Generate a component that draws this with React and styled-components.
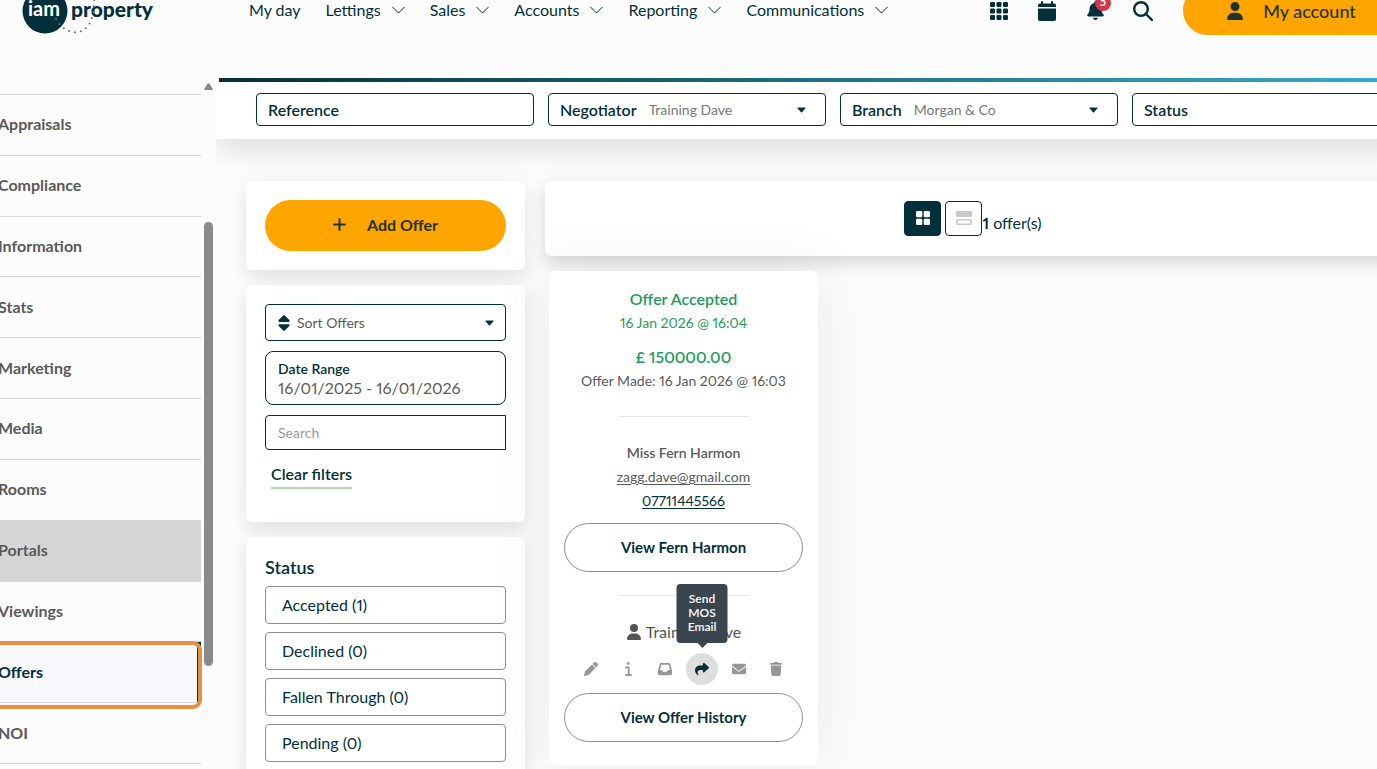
import React, { useState } from "react";
import styled, { createGlobalStyle } from "styled-components";
import {
  FaBell,
  FaEnvelope,
  FaInbox,
  FaPen,
  FaShare,
  FaSort,
  FaTrash,
  FaUser,
} from "react-icons/fa6";

const GlobalStyle = createGlobalStyle`
  * {
    box-sizing: border-box;
  }

  body {
    margin: 0;
    background: #fcfcfc;
    color: #545454;
    font-family: Lato, "Open Sans", sans-serif;
    font-size: 16px;
    font-variant-numeric: proportional-nums;
  }

  button,
  input,
  select {
    font: inherit;
    color: inherit;
    margin: 0;
  }

  button {
    cursor: pointer;
  }
`;

const Shell = styled.div`
  height: 100vh;
  overflow: hidden;
`;

const Page = styled.div`
  display: flex;
  flex-direction: column;
  height: calc(100vh + 14px);
  margin: -14px -24px 0 -2px;
`;

const Header = styled.header`
  display: flex;
  align-items: flex-start;
  flex: none;
  height: 92px;
  padding-left: 24px;
  color: #02303a;
`;

const LogoLink = styled.a`
  display: flex;
  width: 136px;
  margin-right: 91px;
  color: #02303a;
`;

const Nav = styled.nav`
  display: flex;
  align-items: center;
  gap: 25px;
  height: 48px;
`;

const NavLink = styled.a`
  display: flex;
  align-items: center;
  gap: 11px;
  font-size: 16px;
  line-height: 24px;
  white-space: nowrap;
  color: #02303a;
  text-decoration: none;
`;

const Tools = styled.div`
  display: flex;
  align-items: center;
  gap: 24px;
  height: 49px;
  margin-left: auto;
`;

const ToolButton = styled.button`
  position: relative;
  display: flex;
  align-items: center;
  justify-content: center;
  width: 24px;
  height: 24px;
  padding: 0;
  border: 0;
  background: none;
  color: #02303a;
`;

const Badge = styled.span`
  position: absolute;
  top: -4px;
  right: -4px;
  width: 16px;
  height: 16px;
  border-radius: 50%;
  background: #d63649;
  color: #fff;
  font-size: 11px;
  font-weight: 700;
  line-height: 14px;
  text-align: center;
`;

const AccountButton = styled.button`
  display: flex;
  align-items: center;
  justify-content: center;
  gap: 19px;
  width: 218px;
  height: 49px;
  margin-left: 4px;
  padding: 0 8px 0 6px;
  border: 0;
  border-radius: 25px;
  background: #ffa500;
  color: #1f3428;
  font-size: 18px;
  font-weight: 500;
`;

const Body = styled.div`
  display: flex;
  flex: 1;
  min-height: 0;
`;

const Sidebar = styled.nav`
  display: flex;
  flex: none;
  width: 218px;
`;

const SideList = styled.ul`
  display: flex;
  flex-direction: column;
  width: 203px;
  margin: 16px 0 5px;
  padding: 0;
  border-top: 1px solid #d9d9d9;
  list-style: none;
`;

const SideItem = styled.li`
  position: relative;
  flex: 1;
  min-height: 48px;
  border-bottom: 1px solid #d9d9d9;
`;

const SideLink = styled.a`
  display: flex;
  align-items: center;
  height: 100%;
  padding-bottom: 2px;
  border-right: 4px solid ${(p) => (p.$active ? "#02303a" : "transparent")};
  background: ${(p) => (p.$active ? "#f8f8fd" : p.$hovered ? "#d5d5d5" : "none")};
  color: ${(p) => (p.$active ? "#02303a" : "#5a5a5a")};
  font-size: 16px;
  font-weight: 700;
  text-decoration: none;
`;

const Highlight = styled.span`
  position: absolute;
  inset: -1px -1px -7px -12px;
  border: 4px solid #e8903f;
  border-radius: 9px;
  pointer-events: none;
`;

const ScrollTrack = styled.div`
  display: flex;
  flex-direction: column;
  width: 9px;
  margin-left: 3px;
  padding-top: 5px;
`;

const ScrollArrow = styled.svg`
  width: 9px;
  height: 7px;
  margin-bottom: 132px;
  fill: #8a8a8a;
`;

const ScrollThumb = styled.div`
  height: 444px;
  border-radius: 5px;
  background: #8a8a8a;
`;

const Main = styled.main`
  flex: 1;
  min-width: 0;
  overflow: hidden;
`;

const FilterBar = styled.form`
  position: relative;
  background: #fff;
  box-shadow: 0 14px 24px rgba(0, 0, 0, 0.1);
`;

const Rule = styled.div`
  height: 4px;
  margin-left: 3px;
  background: linear-gradient(90deg, #042f3a, #1f6f80 50%, #37adcc);
`;

const Filters = styled.div`
  display: grid;
  grid-auto-flow: column;
  grid-auto-columns: 278px;
  gap: 14px;
  padding: 11px 0 13px 40px;
`;

const Field = styled.div`
  display: flex;
  align-items: center;
  gap: 12px;
  height: 33px;
  padding: 0 19px 0 11px;
  border: 1px solid #02303a;
  border-radius: 4px;
  background: #fff;
`;

const FieldLabel = styled.label`
  color: #02303a;
  font-size: 16px;
  font-weight: 600;
`;

const FieldInput = styled.input`
  flex: 1;
  min-width: 0;
  padding: 0;
  border: 0;
  outline: 0;
  background: none;
`;

const PlainSelect = styled.select`
  flex: 1;
  min-width: 0;
  padding: 0;
  border: 0;
  outline: 0;
  appearance: none;
  background: none;
  color: ${(p) => p.$color || "#777"};
  font-size: 14px;
`;

const Content = styled.div`
  display: flex;
  align-items: flex-start;
  gap: 20px;
  padding: 42px 0 0 30px;
`;

const FilterColumn = styled.aside`
  display: flex;
  flex-direction: column;
  flex: none;
  gap: 15px;
  width: 279px;
`;

const Card = styled.section`
  padding: 19px;
  border-radius: 6px;
  background: #fff;
  box-shadow: 0 8px 16px rgba(0, 0, 0, 0.08), 0 0 30px rgba(0, 0, 0, 0.04);
`;

const AddButton = styled.button`
  display: flex;
  align-items: center;
  justify-content: center;
  gap: 21px;
  width: 100%;
  height: 51px;
  padding: 0 6px 2px;
  border: 0;
  border-radius: 26px;
  background: #ffa500;
  color: #1f3428;
  font-weight: 700;
`;

const FilterCard = styled(Card)`
  display: flex;
  flex-direction: column;
  align-items: stretch;
  gap: 10px;
  padding-bottom: 33px;
`;

const SortField = styled.div`
  display: flex;
  align-items: center;
  gap: 4px;
  height: 37px;
  padding: 0 11px 0 9px;
  border: 1px solid #02303a;
  border-radius: 4px;
  color: #02303a;
`;

const DateField = styled.div`
  display: flex;
  flex-direction: column;
  justify-content: center;
  height: 54px;
  padding: 0 12px;
  border: 1px solid #02303a;
  border-radius: 8px;

  label {
    color: #02303a;
    font-size: 14px;
    font-weight: 600;
    line-height: 18px;
  }

  input {
    width: 100%;
    height: 18px;
    padding: 0;
    border: 0;
    outline: 0;
    background: none;
    color: #5c5c5c;
    font-size: 16px;
  }
`;

const SearchInput = styled.input`
  width: 100%;
  height: 35px;
  padding: 0 12px;
  border: 1px solid #02303a;
  border-radius: 4px 0 0 4px;
  outline: 0;
  background: #fff;
  font-size: 14px;

  &::placeholder {
    color: #999;
    opacity: 1;
  }
`;

const ClearButton = styled.button`
  align-self: flex-start;
  height: 29px;
  margin-left: 6px;
  padding: 0;
  border: 0;
  border-bottom: 2px solid #b7dca6;
  background: none;
  color: #02303a;
  font-weight: 600;
`;

const StatusTitle = styled.h2`
  margin: 0 0 8px;
  color: #02303a;
  font-size: 18px;
  font-weight: 600;
  line-height: 22px;
`;

const StatusList = styled.div`
  display: flex;
  flex-direction: column;
  gap: 8px;
`;

const StatusButton = styled.button`
  height: 38px;
  padding: 0 16px 2px;
  border: 1px solid #8c8f91;
  border-radius: 4px;
  background: #fff;
  color: #02303a;
  text-align: left;
`;

const Results = styled.div`
  display: flex;
  flex-direction: column;
  flex: 1;
  gap: 15px;
  min-width: 0;
`;

const ResultsBar = styled.div`
  display: flex;
  align-items: center;
  justify-content: center;
  height: 75px;
  border-radius: 6px;
  background: #fff;
  box-shadow: 0 8px 16px rgba(0, 0, 0, 0.12), 0 0 30px rgba(0, 0, 0, 0.04);
`;

const ViewButton = styled.button`
  display: flex;
  align-items: center;
  justify-content: center;
  width: 37px;
  height: 35px;
  padding: 0 0 2px;
  border: 1px solid #02303a;
  border-radius: 4px;
  background: ${(p) => (p.$active ? "#02303a" : "#fff")};
  color: ${(p) => (p.$active ? "#fff" : "#c9c9c9")};

  & + & {
    margin-left: 4px;
  }
`;

const Count = styled.p`
  margin: 0;
  padding-top: 9px;
  color: #02303a;
  line-height: 24px;
`;

const OfferCard = styled.article`
  display: flex;
  flex-direction: column;
  align-items: center;
  width: 269px;
  margin-left: 4px;
  padding: 16px 15px 23px;
  border-radius: 6px;
  background: #fff;
  box-shadow: 0 0 60px rgba(0, 0, 0, 0.08);
`;

const OfferLine = styled.p`
  margin: ${(p) => (p.$spaced ? "10px" : 0)} 0 0;
  color: ${(p) => (p.$green ? "#1c9c5b" : "#5a5a5a")};
  font-size: ${(p) => (p.$large ? "16px" : "14px")};
  font-weight: ${(p) => (p.$strong ? 600 : 400)};
  line-height: 24px;
`;

const ContactLink = styled.a`
  color: ${(p) => (p.$dark ? "#02303a" : "#5a5a5a")};
  font-size: 14px;
  line-height: 24px;
  text-underline-offset: 2px;
`;

const Divider = styled.hr`
  width: 132px;
  margin: 23px 0 24px;
  border: 0;
  border-top: 1px solid #e6e6e6;
`;

const PillButton = styled.button`
  width: 100%;
  height: 49px;
  margin-top: ${(p) => (p.$spaced ? "10px" : 0)};
  padding: 0 0 2px;
  border: 1px solid #8c8f91;
  border-radius: 25px;
  background: #fff;
  color: #02303a;
  font-size: 15px;
  font-weight: 700;
`;

const Owner = styled.p`
  display: flex;
  align-items: center;
  gap: 4px;
  margin: 0 0 9px;
  line-height: 24px;
`;

const Actions = styled.div`
  display: flex;
  gap: 5px;
  margin-bottom: 8px;
`;

const ActionButton = styled.button`
  position: relative;
  display: flex;
  align-items: center;
  justify-content: center;
  width: 32px;
  height: 32px;
  padding: 0;
  border: 0;
  border-radius: 50%;
  background: ${(p) => (p.$active ? "#dedede" : "none")};
  color: ${(p) => (p.$active ? "#02303a" : "#969696")};
`;

const Tooltip = styled.span`
  position: absolute;
  bottom: 42px;
  left: 50%;
  width: 51px;
  padding: 8px 10px 9px;
  transform: translateX(-50%);
  border-radius: 4px;
  background: #39464f;
  color: #fff;
  font-size: 12px;
  font-weight: 600;
  line-height: 14px;
  text-align: center;

  &::after {
    content: "";
    position: absolute;
    top: 100%;
    left: 50%;
    margin-left: -5px;
    border: 5px solid transparent;
    border-top-color: #39464f;
    border-bottom: 0;
  }
`;

const Logo = () => (
  <svg width="136" height="50" viewBox="0 0 136 50" role="img" aria-label="iam property">
    <circle cx="23" cy="25" r="22.5" fill="#02303a" />
    <text x="6" y="30" fill="#fff" fontSize="20" fontWeight="700">iam</text>
    <text x="49" y="31" fill="#02303a" fontSize="21" fontWeight="900">property</text>
    <path
      d="M34 33 Q39 42 47 45 Q58 49 66 40 Q72 32 72 14"
      fill="none"
      stroke="#56747b"
      strokeWidth="2"
      strokeLinecap="round"
      strokeDasharray="0 6"
    />
  </svg>
);

const Chevron = () => (
  <svg width="13" height="8" viewBox="0 0 13 8" fill="none" stroke="currentColor" strokeLinecap="round" strokeLinejoin="round" aria-hidden="true">
    <path d="M.7 1.2 6.5 7 12.3 1.2" />
  </svg>
);

const Caret = () => (
  <svg width="9" height="6" viewBox="0 0 9 6" fill="#02303a" aria-hidden="true">
    <path d="M1 .5h7q.8 0 .4.8L5 5.2q-.5.5-1 0L.6 1.3Q.2.5 1 .5Z" />
  </svg>
);

const AppsIcon = () => (
  <svg width="18" height="18" viewBox="0 0 18 18" fill="currentColor" aria-hidden="true">
    {[0, 6.5, 13].map((y) =>
      [0, 6.5, 13].map((x) => <rect key={`${x}-${y}`} x={x} y={y} width="5" height="5" rx="1.2" />)
    )}
  </svg>
);

const CalendarIcon = () => (
  <svg width="18" height="20" viewBox="0 0 18 20" fill="currentColor" aria-hidden="true">
    <path d="M4 0q1 0 1 1v1.5h8V1q0-1 1-1t1 1v1.5h1.300q1.700 0 1.700 1.700V6H0V4.200q0-1.700 1.700-1.700H3V1q0-1 1-1ZM0 7.500h18v10.700q0 1.800-1.800 1.800H1.800Q0 20 0 18.200Z" />
  </svg>
);

const SearchIcon = () => (
  <svg width="20" height="20" viewBox="0 0 20 20" fill="none" stroke="currentColor" strokeWidth="2.4" strokeLinecap="round" aria-hidden="true">
    <circle cx="8" cy="8" r="6.8" />
    <path d="m13 13 5.800 5.800" />
  </svg>
);

const PlusIcon = () => (
  <svg width="13" height="13" viewBox="0 0 13 13" stroke="currentColor" strokeWidth="2" strokeLinecap="round" aria-hidden="true">
    <path d="M6.500 1v11M1 6.500h11" />
  </svg>
);

const InfoIcon = () => (
  <svg width="7" height="14" viewBox="0 0 7 14" fill="none" stroke="currentColor" strokeWidth="1.800" aria-hidden="true">
    <circle cx="3.200" cy="1.500" r="1.400" fill="currentColor" stroke="none" />
    <path d="M1 5.500h2.700V13M1 13h5" strokeLinecap="round" />
  </svg>
);

const GridIcon = () => (
  <svg width="14" height="14" viewBox="0 0 14 14" fill="currentColor" aria-hidden="true">
    <rect width="6.300" height="6.300" rx="1.200" />
    <rect x="7.700" width="6.300" height="6.300" rx="1.200" />
    <rect y="7.700" width="6.300" height="6.300" rx="1.200" />
    <rect x="7.700" y="7.700" width="6.300" height="6.300" rx="1.200" />
  </svg>
);

const RowsIcon = () => (
  <svg width="16" height="14" viewBox="0 0 16 14" fill="currentColor" aria-hidden="true">
    <rect width="16" height="6" rx="1.500" />
    <rect x=".8" y="8.800" width="14.400" height="4.400" rx="1.200" fill="none" stroke="currentColor" strokeWidth="1.600" />
  </svg>
);

const navItems = [
  { label: "My day" },
  { label: "Lettings", menu: true },
  { label: "Sales", menu: true },
  { label: "Accounts", menu: true },
  { label: "Reporting", menu: true },
  { label: "Communications", menu: true },
];

const sideItems = [
  "Appraisals",
  "Compliance",
  "Information",
  "Stats",
  "Marketing",
  "Media",
  "Rooms",
  "Portals",
  "Viewings",
  "Offers",
  "NOI",
];

const statuses = ["Accepted (1)", "Declined (0)", "Fallen Through (0)", "Pending (0)"];

const actions = [
  { label: "Edit offer", icon: <FaPen size={14} /> },
  { label: "Offer information", icon: <InfoIcon /> },
  { label: "Inbox", icon: <FaInbox size={14} /> },
  { label: "Send MOS Email", icon: <FaShare size={14} />, active: true },
  { label: "Email", icon: <FaEnvelope size={14} /> },
  { label: "Delete offer", icon: <FaTrash size={14} /> },
];

const App = () => {
  const [view, setView] = useState("grid");
  const [dateRange, setDateRange] = useState("16/01/2025 - 16/01/2026");
  const [search, setSearch] = useState("");

  return (
    <Shell>
      <GlobalStyle />
      <Page>
        <Header>
          <LogoLink href="#home">
            <Logo />
          </LogoLink>
          <Nav>
            {navItems.map(({ label, menu }) => (
              <NavLink key={label} href="#nav">
                {label}
                {menu && <Chevron />}
              </NavLink>
            ))}
          </Nav>
          <Tools>
            <ToolButton aria-label="Apps"><AppsIcon /></ToolButton>
            <ToolButton aria-label="Calendar"><CalendarIcon /></ToolButton>
            <ToolButton aria-label="Notifications">
              <FaBell size={19} />
              <Badge>5</Badge>
            </ToolButton>
            <ToolButton aria-label="Search"><SearchIcon /></ToolButton>
            <AccountButton>
              <FaUser size={18} />
              My account
            </AccountButton>
          </Tools>
        </Header>

        <Body>
          <Sidebar>
            <SideList>
              {sideItems.map((item) => (
                <SideItem key={item}>
                  <SideLink href="#section" $active={item === "Offers"} $hovered={item === "Portals"}>
                    {item}
                  </SideLink>
                  {item === "Offers" && <Highlight />}
                </SideItem>
              ))}
            </SideList>
            <ScrollTrack>
              <ScrollArrow viewBox="0 0 9 7">
                <path d="M3.500.8q1-1 2 0L8.800 6q.2 1-.8 1H1Q0 7 .2 6Z" />
              </ScrollArrow>
              <ScrollThumb />
            </ScrollTrack>
          </Sidebar>

          <Main>
            <FilterBar>
              <Rule />
              <Filters>
                <Field>
                  <FieldLabel htmlFor="reference">Reference</FieldLabel>
                  <FieldInput id="reference" />
                </Field>
                <Field>
                  <FieldLabel htmlFor="negotiator">Negotiator</FieldLabel>
                  <PlainSelect id="negotiator">
                    <option>Training Dave</option>
                  </PlainSelect>
                  <Caret />
                </Field>
                <Field>
                  <FieldLabel htmlFor="branch">Branch</FieldLabel>
                  <PlainSelect id="branch">
                    <option>Morgan &amp; Co</option>
                  </PlainSelect>
                  <Caret />
                </Field>
                <Field>
                  <FieldLabel htmlFor="status">Status</FieldLabel>
                  <FieldInput id="status" />
                </Field>
              </Filters>
            </FilterBar>

            <Content>
              <FilterColumn>
                <Card>
                  <AddButton>
                    <PlusIcon />
                    Add Offer
                  </AddButton>
                </Card>
                <FilterCard>
                  <SortField>
                    <FaSort size={18} />
                    <PlainSelect aria-label="Sort Offers" $color="#5a5a5a">
                      <option>Sort Offers</option>
                    </PlainSelect>
                    <Caret />
                  </SortField>
                  <DateField>
                    <label htmlFor="range">Date Range</label>
                    <input id="range" value={dateRange} onChange={(e) => setDateRange(e.target.value)} />
                  </DateField>
                  <SearchInput
                    aria-label="Search"
                    placeholder="Search"
                    value={search}
                    onChange={(e) => setSearch(e.target.value)}
                  />
                  <ClearButton onClick={() => setSearch("")}>Clear filters</ClearButton>
                </FilterCard>
                <Card>
                  <StatusTitle>Status</StatusTitle>
                  <StatusList>
                    {statuses.map((status) => (
                      <StatusButton key={status}>{status}</StatusButton>
                    ))}
                  </StatusList>
                </Card>
              </FilterColumn>

              <Results>
                <ResultsBar>
                  <ViewButton aria-label="Grid view" $active={view === "grid"} onClick={() => setView("grid")}>
                    <GridIcon />
                  </ViewButton>
                  <ViewButton aria-label="List view" $active={view === "list"} onClick={() => setView("list")}>
                    <RowsIcon />
                  </ViewButton>
                  <Count><b>1</b> offer(s)</Count>
                </ResultsBar>

                <OfferCard>
                  <OfferLine $green $large $strong>Offer Accepted</OfferLine>
                  <OfferLine $green>16 Jan 2026 @ 16:04</OfferLine>
                  <OfferLine $green $large $strong $spaced>£ 150000.00</OfferLine>
                  <OfferLine>Offer Made: 16 Jan 2026 @ 16:03</OfferLine>
                  <Divider />
                  <OfferLine $strong>Miss Fern Harmon</OfferLine>
                  <ContactLink href="mailto:zagg.dave@gmail.com">zagg.dave@gmail.com</ContactLink>
                  <ContactLink href="tel:07711445566" $dark>07711445566</ContactLink>
                  <PillButton $spaced>View Fern Harmon</PillButton>
                  <Divider />
                  <Owner>
                    <FaUser size={16} />
                    Training Dave
                  </Owner>
                  <Actions>
                    {actions.map(({ label, icon, active }) => (
                      <ActionButton key={label} aria-label={label} $active={active}>
                        {icon}
                        {active && <Tooltip role="tooltip">{label}</Tooltip>}
                      </ActionButton>
                    ))}
                  </Actions>
                  <PillButton>View Offer History</PillButton>
                </OfferCard>
              </Results>
            </Content>
          </Main>
        </Body>
      </Page>
    </Shell>
  );
};

export default App;
